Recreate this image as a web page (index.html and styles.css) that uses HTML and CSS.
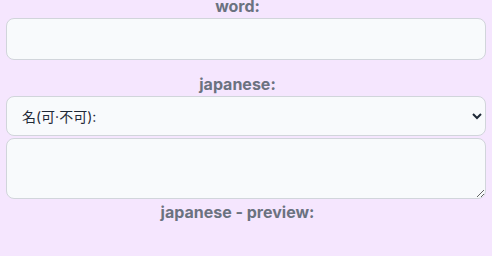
FILE: index.html
```html
<!DOCTYPE html>
<html lang="ja">
<head>
<meta charset="utf-8">
<link rel="stylesheet" href="styles.css">
</head>
<body>
<form class="form">
  <label class="label" for="word">word:</label>
  <input class="field field-input" id="word" type="text">
  <label class="label" for="jp">japanese:</label>
  <select class="field field-select" id="jp">
    <option>名(可·不可):</option>
  </select>
  <textarea class="field field-area"></textarea>
  <div class="label label-preview">japanese - preview:</div>
</form>
</body>
</html>
```

FILE: styles.css
```css
html, body {
  margin: 0;
  background: #f5e6fe;
}
body {
  font-family: Inter, "Noto Sans CJK JP", sans-serif;
}
.form {
  display: flex;
  flex-direction: column;
  padding: 0 6px;
  margin-top: -3px;
}
.label {
  text-align: center;
  font-weight: 700;
  font-size: 16px;
  line-height: 18px;
  color: #6b7280;
  margin-bottom: 3px;
  padding-right: 17px;
}
.field {
  box-sizing: border-box;
  border: 1px solid #d1d5db;
  border-radius: 8px;
  background: #f8fafc;
  font-family: Inter, "Noto Sans CJK JP", sans-serif;
  font-size: 14px;
  color: #1f2937;
  margin: 0;
}
.field-input {
  height: 42px;
  margin-bottom: 15px;
  padding: 0 14px;
}
.field-select {
  height: 40px;
  padding-left: 11px;
  margin-bottom: 2px;
}
.field-area {
  height: 61px;
  margin-bottom: 4px;
  resize: vertical;
  padding: 8px 14px;
}
.label-preview {
  margin-bottom: 0;
}
```
